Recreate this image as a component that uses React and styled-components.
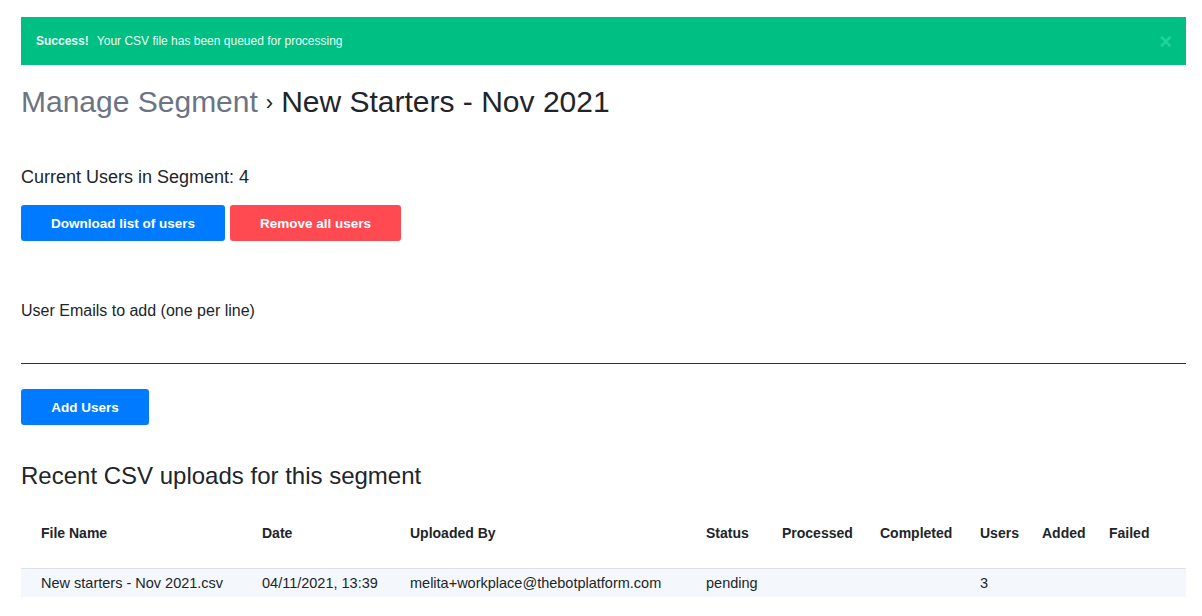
import styled, { createGlobalStyle } from 'styled-components';

const GlobalStyle = createGlobalStyle`
  body {
    margin: 0;
    padding: 0;
    font-family: "Liberation Sans", Arial, sans-serif;
    background-color: #fff;
    color: #212529;
  }
`;

const Page = styled.div`
  padding: 17px 16px 0 21px;
`;

const Alert = styled.div`
  display: flex;
  align-items: center;
  justify-content: space-between;
  height: 48px;
  padding: 0 14px 0 15px;
  background-color: #00bf83;
  color: #eafaf4;
  font-size: 12px;
`;

const AlertText = styled.span`
  strong {
    font-weight: 700;
    margin-right: 5px;
  }
`;

const Close = styled.span`
  color: #1fd39b;
  font-size: 22px;
  font-weight: 700;
  line-height: 1;
  margin-top: 1px;
`;

const Title = styled.h1`
  margin: 19px 0 0;
  font-size: 30px;
  font-weight: 400;
  line-height: 36px;
  color: #212529;
`;

const Crumb = styled.span`
  color: #6c7484;
`;

const Sep = styled.span`
  font-size: 22px;
  margin: 0 8px 0 8px;
  position: relative;
  top: -2px;
`;

const Count = styled.p`
  margin: 43px 0 0;
  font-size: 18px;
  line-height: 22px;
`;

const ButtonRow = styled.div`
  display: flex;
  gap: 5px;
  margin-top: 17px;
`;

const Button = styled.button`
  height: 36px;
  width: ${(p) => p.$w}px;
  padding: 0;
  border: none;
  border-radius: 3px;
  background-color: ${(p) => (p.$danger ? '#ff4a52' : '#007bff')};
  color: #fff;
  font-family: inherit;
  font-size: 13.5px;
  font-weight: 700;
  cursor: pointer;
`;

const Label = styled.label`
  display: block;
  margin-top: 60px;
  font-size: 16px;
  line-height: 19px;
`;

const EmailBox = styled.textarea`
  display: block;
  box-sizing: border-box;
  width: 100%;
  height: 35px;
  margin-top: 9px;
  border: none;
  border-bottom: 1.5px solid #333;
  resize: none;
  outline: none;
  font-family: inherit;
`;

const AddRow = styled.div`
  margin-top: 25px;
`;

const SubHeading = styled.h2`
  margin: 37px 0 0;
  font-size: 24px;
  font-weight: 400;
  line-height: 28px;
  color: #212529;
`;

const Table = styled.div`
  margin-top: 8px;
  display: grid;
  grid-template-columns: 241px 148px 296px 76px 98px 100px 62px 67px 77px;
  font-size: 14.5px;
`;

const Head = styled.div`
  height: 70px;
  padding-left: ${(p) => (p.$first ? '20px' : '0')};
  display: flex;
  align-items: center;
  font-size: 14px;
  font-weight: 700;
  color: #212529;
  border-bottom: 2px solid #dee2e6;
  margin-bottom: -1px;
`;

const Cell = styled.div`
  height: 28px;
  padding-left: ${(p) => (p.$first ? '20px' : '0')};
  display: flex;
  align-items: center;
  background-color: #f4f8fc;
  color: #212529;
`;

const headers = ['File Name', 'Date', 'Uploaded By', 'Status', 'Processed', 'Completed', 'Users', 'Added', 'Failed'];

const rows = [
  ['New starters - Nov 2021.csv', '04/11/2021, 13:39', 'melita+workplace@thebotplatform.com', 'pending', '', '', '3', '', ''],
];

export default function App() {
  return (
    <Page>
      <GlobalStyle />
      <Alert>
        <AlertText>
          <strong>Success!</strong> Your CSV file has been queued for processing
        </AlertText>
        <Close>×</Close>
      </Alert>

      <Title>
        <Crumb>Manage Segment</Crumb>
        <Sep>›</Sep>
        New Starters - Nov 2021
      </Title>

      <Count>Current Users in Segment: 4</Count>
      <ButtonRow>
        <Button $w={204}>Download list of users</Button>
        <Button $w={171} $danger>Remove all users</Button>
      </ButtonRow>

      <Label>User Emails to add (one per line)</Label>
      <EmailBox />
      <AddRow>
        <Button $w={128}>Add Users</Button>
      </AddRow>

      <SubHeading>Recent CSV uploads for this segment</SubHeading>
      <Table>
        {headers.map((h, i) => (
          <Head key={h} $first={i === 0}>{h}</Head>
        ))}
        {rows.map((r, ri) =>
          r.map((c, i) => (
            <Cell key={`${ri}-${i}`} $first={i === 0}>{c}</Cell>
          ))
        )}
      </Table>
    </Page>
  );
}
